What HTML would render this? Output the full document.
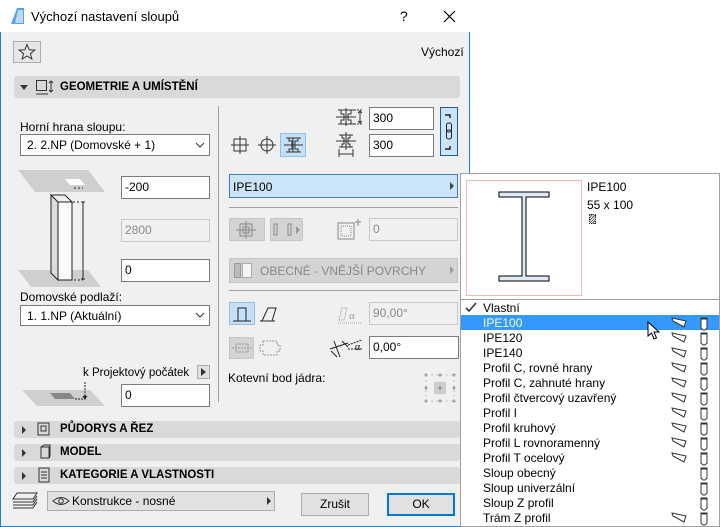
<!DOCTYPE html>
<html><head><meta charset="utf-8"><style>
*{box-sizing:border-box;margin:0;padding:0}
body{width:720px;height:527px;overflow:hidden;background:#fff;font-family:"Liberation Sans",sans-serif;font-size:12px;color:#000;position:relative}
.a{position:absolute}
.dlg{left:0;top:0;width:470px;height:527px;background:#f0f0f0;border:1px solid #1883d7;border-top:none}
.title{left:0;top:0;width:470px;height:32px;background:#fff}
.inp{position:absolute;background:#fff;border:1px solid #7a7a7a;padding:3px 3px;font-size:12px;line-height:14px}
.dis{background:#f0f0f0;border-color:#c8c8c8;color:#8a8a8a}
.sel{position:absolute;background:#fff;border:1px solid #7a7a7a;padding:3px 6px;line-height:14px}
.hdr{position:absolute;left:14px;width:446px;background:#d9d9d9;border-radius:3px;font-weight:bold;font-size:11.5px}
.tri{position:absolute;width:0;height:0}
.row{position:absolute;left:461px;width:258px;height:15px;line-height:16px;padding-left:22px}
.btn{position:absolute;background:#e1e1e1;border:1px solid #adadad;text-align:center;line-height:20px}
</style></head><body>
<div class="a dlg"></div>
<div class="a title"></div>
<svg class="a" style="left:9px;top:7px" width="17" height="18"><path d="M2 17 L8 1 L15 1 L15 17 Z" fill="#5aa3e8"/><path d="M9 3 L14 3 L14 16 L6 16 Z" fill="#bcdaf7"/></svg>
<div class="a" style="left:31px;top:9px;font-size:13px">Výchozí nastavení sloupů</div>
<div class="a" style="left:400px;top:8px;font-size:14px">?</div>
<svg class="a" style="left:443px;top:10px" width="13" height="13"><path d="M1 1L12 12M12 1L1 12" stroke="#000" stroke-width="1.2"/></svg>

<div class="a" style="left:13px;top:41px;width:28px;height:22px;border:1px solid #adadad;background:#e6e6e6"></div>
<svg class="a" style="left:18px;top:43px" width="18" height="18"><path d="M9 1.5L11.2 6.8L16.8 7.1L12.4 10.6L13.9 16L9 13L4.1 16L5.6 10.6L1.2 7.1L6.8 6.8Z" fill="none" stroke="#333"/></svg>
<div class="a" style="left:421px;top:45px">Výchozí</div>

<div class="hdr" style="top:76px;height:22px"></div>
<div class="tri" style="left:20px;top:85px;border-left:4px solid transparent;border-right:4px solid transparent;border-top:5px solid #333"></div>
<svg class="a" style="left:35px;top:79px" width="20" height="17"><rect x="1.5" y="1.5" width="10" height="10" fill="none" stroke="#333"/><path d="M1 15L13 15M16 2V13M14 4L16 2L18 4M14 11L16 13L18 11" stroke="#333" fill="none"/></svg>
<div class="a" style="left:60px;top:81px;font-weight:bold;font-size:11.5px">GEOMETRIE A UMÍSTĚNÍ</div>

<div class="a" style="left:218px;top:106px;width:1px;height:296px;background:#a0a0a0"></div>

<div class="a" style="left:20px;top:120px">Horní hrana sloupu:</div>
<div class="sel" style="left:20px;top:134px;width:190px;height:22px">2. 2.NP (Domovské + 1)</div>
<svg class="a" style="left:195px;top:142px" width="10" height="6"><path d="M1 1L5 5L9 1" stroke="#333" fill="none"/></svg>

<svg class="a" style="left:15px;top:167px" width="90" height="120">
<path d="M3 3H73L90 25H20Z" fill="#cfcfcf"/>
<path d="M50 12H65L70 18H55Z" fill="#fff"/>
<path d="M3 103H73L90 125H20Z" fill="#cfcfcf"/>
<path d="M36 28L43 35V113L36 106Z" fill="#dcdcdc" stroke="#222"/>
<path d="M36 28H50L57 35H43Z" fill="#eee" stroke="#222"/>
<rect x="43" y="35" width="14" height="78" fill="#fafafa" stroke="#222"/>
<path d="M68 35V112M66 35H70M66 112H70" stroke="#222"/>
<path d="M58 35H68M59 113H68M59 21H68" stroke="#222" stroke-dasharray="2 2"/>
</svg>
<div class="inp" style="left:121px;top:176px;width:89px;height:23px">-200</div>
<div class="inp dis" style="left:121px;top:219px;width:89px;height:23px">2800</div>
<div class="inp" style="left:121px;top:259px;width:89px;height:23px">0</div>

<div class="a" style="left:20px;top:290px">Domovské podlaží:</div>
<div class="sel" style="left:20px;top:305px;width:190px;height:21px">1. 1.NP (Aktuální)</div>
<svg class="a" style="left:195px;top:312px" width="10" height="6"><path d="M1 1L5 5L9 1" stroke="#333" fill="none"/></svg>

<div class="a" style="left:83px;top:367px;font-size:11.5px">k Projektový počátek</div>
<div class="a" style="left:197px;top:365px;width:13px;height:14px;background:#e1e1e1;border:1px solid #adadad"></div>
<div class="tri" style="left:201px;top:368px;border-top:4px solid transparent;border-bottom:4px solid transparent;border-left:5px solid #333"></div>
<svg class="a" style="left:20px;top:380px" width="85" height="30"><path d="M2 10H70L85 26H17Z" fill="#cfcfcf"/><path d="M30 13H50L55 19H35Z" fill="#888"/><path d="M65 2V18M63 16L65 19L67 16M55 19H65" stroke="#222" stroke-dasharray="2 1"/></svg>
<div class="inp" style="left:121px;top:384px;width:89px;height:23px">0</div>

<svg class="a" style="left:231px;top:136px" width="18" height="18"><rect x="3" y="3" width="12" height="12" fill="none" stroke="#333"/><path d="M9 0V18M0 9H18" stroke="#333"/></svg>
<svg class="a" style="left:258px;top:136px" width="18" height="18"><circle cx="9" cy="9" r="6" fill="none" stroke="#333"/><path d="M9 0V18M0 9H18" stroke="#333"/></svg>
<div class="a" style="left:280px;top:133px;width:26px;height:24px;background:#c5dff6;border:1px solid #8fc0ea"></div>
<svg class="a" style="left:284px;top:136px" width="19" height="18"><path d="M2 2H17M2 16H17M9 2V16M0 9H19" stroke="#333" fill="none"/><path d="M5 2V5H8V13H5V16M14 2V5H11V13H14V16" stroke="#333" fill="none"/></svg>
<svg class="a" style="left:336px;top:106px" width="30" height="22"><path d="M2 4H18M2 18H18M0 11H20M10 2V20M5 4V8H8V14H5V18M15 4V8H12V14H15V18" stroke="#333" fill="none"/><path d="M18 4H26M18 18H26" stroke="#333" stroke-dasharray="2 1"/><path d="M24 5V17M22 7L24 5L26 7M22 15L24 17L26 15" stroke="#333" fill="none"/></svg>
<svg class="a" style="left:336px;top:132px" width="22" height="26"><path d="M3 3H17M3 15H17M0 9H20M10 0V18M6 3V6H8V12H6V15M14 3V6H12V12H14V15" stroke="#333" fill="none"/><path d="M3 17V25M17 17V25M3 22H17" stroke="#333" fill="none"/></svg>
<div class="inp" style="left:369px;top:107px;width:65px;height:23px">300</div>
<div class="inp" style="left:369px;top:134px;width:65px;height:23px">300</div>
<div class="a" style="left:440px;top:107px;width:18px;height:49px;background:#cce4f7;border:1px solid #1c5f9f"></div>
<svg class="a" style="left:443px;top:111px" width="12" height="42"><path d="M2 4H7V7M2 38H7V35" stroke="#222" stroke-width="1.5" fill="none"/><rect x="3.5" y="12" width="5" height="9" rx="2" fill="none" stroke="#222"/><rect x="3.5" y="19" width="5" height="9" rx="2" fill="none" stroke="#222"/></svg>

<div class="a" style="left:229px;top:174px;width:229px;height:24px;background:#cce4f7;border:1px solid #3d7fc0;padding:5px 3px">IPE100</div>
<div class="tri" style="left:450px;top:182px;border-top:4px solid transparent;border-bottom:4px solid transparent;border-left:4px solid #444"></div>
<div class="a" style="left:229px;top:207px;width:229px;height:1px;background:#a0a0a0"></div>

<div class="a" style="left:229px;top:218px;width:36px;height:23px;background:#d4d4d4;border:1px solid #c6c6c6"></div>
<svg class="a" style="left:236px;top:221px" width="20" height="18"><rect x="4" y="3" width="12" height="12" fill="none" stroke="#888"/><rect x="7" y="6" width="6" height="6" fill="none" stroke="#888"/><path d="M10 0V18M0 9H20" stroke="#888"/></svg>
<div class="a" style="left:270px;top:218px;width:33px;height:23px;background:#d4d4d4;border:1px solid #c6c6c6"></div>
<svg class="a" style="left:273px;top:222px" width="28" height="16"><rect x="1" y="2" width="3" height="11" fill="none" stroke="#888"/><rect x="15" y="2" width="3" height="11" fill="none" stroke="#888"/><path d="M23 4L27 8L23 12Z" fill="#999"/></svg>
<svg class="a" style="left:333px;top:218px" width="30" height="24"><rect x="5" y="5" width="16" height="16" fill="none" stroke="#888"/><rect x="8" y="8" width="10" height="10" fill="none" stroke="#888" stroke-dasharray="1 1"/><path d="M25 1V8M22 4H28" stroke="#888"/></svg>
<div class="inp dis" style="left:369px;top:218px;width:89px;height:23px">0</div>

<div class="a" style="left:229px;top:258px;width:229px;height:25px;background:#d4d4d4;border:1px solid #c6c6c6;color:#888;padding:5px 0 0 30px;font-size:12px">OBECNÉ - VNĚJŠÍ POVRCHY</div>
<div class="a" style="left:234px;top:263px;width:7px;height:15px;background:#bbb;border:1px solid #999"></div>
<div class="a" style="left:242px;top:263px;width:10px;height:15px;background:#f5f5f5;border:1px solid #aaa"></div>
<div class="tri" style="left:450px;top:266px;border-top:4px solid transparent;border-bottom:4px solid transparent;border-left:4px solid #999"></div>
<div class="a" style="left:229px;top:290px;width:229px;height:1px;background:#a0a0a0"></div>

<div class="a" style="left:229px;top:302px;width:26px;height:23px;background:#c5dff6;border:1px solid #8fc0ea"></div>
<svg class="a" style="left:232px;top:305px" width="20" height="18"><path d="M1 16H19M6 16V3H14V16" stroke="#222" fill="none"/></svg>
<svg class="a" style="left:259px;top:305px" width="20" height="18"><path d="M1 16H16M3 16L9 3H17L13 16" stroke="#222" fill="none"/></svg>
<svg class="a" style="left:336px;top:304px" width="26" height="20"><path d="M3 16L6 4H11L8 16Z" fill="none" stroke="#999" stroke-dasharray="1 1"/><text x="13" y="15" font-size="11" fill="#999" font-family="Liberation Serif">α</text><path d="M2 19H26" stroke="#aaa" stroke-dasharray="1 1"/></svg>
<div class="inp dis" style="left:369px;top:302px;width:89px;height:23px">90,00°</div>

<div class="a" style="left:229px;top:337px;width:25px;height:22px;background:#d4d4d4;border:1px solid #c6c6c6"></div>
<svg class="a" style="left:230px;top:340px" width="24" height="16"><path d="M2 8H22M6 4H18V12H6Z" stroke="#999" fill="none" stroke-dasharray="2 1"/></svg>
<svg class="a" style="left:259px;top:338px" width="22" height="20"><path d="M4 3H18V7H21V13H18V17H4V13H1V7H4Z" stroke="#999" fill="none" stroke-dasharray="2 1"/></svg>
<svg class="a" style="left:328px;top:337px" width="36" height="24"><path d="M2 12L20 6M6 4L12 20M3 14L9 20M14 4L20 10" stroke="#222" fill="none"/><path d="M20 8L34 3M20 12H35" stroke="#222" stroke-dasharray="2 1"/><text x="27" y="13" font-size="10" font-family="Liberation Serif">α</text></svg>
<div class="inp" style="left:369px;top:336px;width:90px;height:23px">0,00°</div>

<div class="a" style="left:228px;top:371px">Kotevní bod jádra:</div>
<svg class="a" style="left:423px;top:372px" width="34" height="32"><g fill="#999"><circle cx="3" cy="3" r="1.5"/><circle cx="17" cy="3" r="1.5"/><circle cx="31" cy="3" r="1.5"/><circle cx="3" cy="16" r="1.5"/><circle cx="31" cy="16" r="1.5"/><circle cx="3" cy="29" r="1.5"/><circle cx="17" cy="29" r="1.5"/><circle cx="31" cy="29" r="1.5"/></g><path d="M3 3H31M3 29H31M3 3V29M31 3V29" stroke="#bbb" stroke-dasharray="2 3"/><rect x="11" y="10" width="12" height="12" fill="#ccc"/><circle cx="17" cy="16" r="1.5" fill="#888"/></svg>

<div class="hdr" style="top:421px;height:17px"></div>
<div class="hdr" style="top:444px;height:17px"></div>
<div class="hdr" style="top:467px;height:17px"></div>
<div class="tri" style="left:22px;top:426px;border-top:4px solid transparent;border-bottom:4px solid transparent;border-left:4px solid #333"></div>
<div class="tri" style="left:22px;top:449px;border-top:4px solid transparent;border-bottom:4px solid transparent;border-left:4px solid #333"></div>
<div class="tri" style="left:22px;top:472px;border-top:4px solid transparent;border-bottom:4px solid transparent;border-left:4px solid #333"></div>
<svg class="a" style="left:36px;top:421px" width="16" height="17"><rect x="2" y="2" width="11" height="12" fill="none" stroke="#333"/><rect x="5" y="5" width="5" height="5" fill="none" stroke="#333"/></svg>
<svg class="a" style="left:38px;top:444px" width="14" height="17"><path d="M3 3H11V14H3ZM3 3L6 1H12V12L11 14" stroke="#333" fill="none"/></svg>
<svg class="a" style="left:37px;top:467px" width="14" height="17"><rect x="2" y="1" width="10" height="14" fill="none" stroke="#333"/><path d="M4 5H10M4 8H10M4 11H10" stroke="#333"/></svg>
<div class="a" style="left:60px;top:423px;font-weight:bold;font-size:11.5px">PŮDORYS A ŘEZ</div>
<div class="a" style="left:60px;top:446px;font-weight:bold;font-size:11.5px">MODEL</div>
<div class="a" style="left:60px;top:469px;font-weight:bold;font-size:11.5px">KATEGORIE A VLASTNOSTI</div>

<svg class="a" style="left:11px;top:491px" width="28" height="20"><path d="M6 2H26L22 8H2Z M2 11H22L26 5 M2 14H22L26 8 M2 17H22L26 11" stroke="#333" fill="none"/></svg>
<div class="a" style="left:47px;top:491px;width:228px;height:20px;background:#e1e1e1;border:1px solid #adadad;padding:2px 0 0 24px">Konstrukce - nosné</div>
<svg class="a" style="left:52px;top:496px" width="18" height="10"><path d="M1 5Q9 -2 17 5Q9 12 1 5Z" fill="none" stroke="#333"/><circle cx="9" cy="5" r="2.3" fill="none" stroke="#333"/></svg>
<div class="tri" style="left:267px;top:497px;border-top:4px solid transparent;border-bottom:4px solid transparent;border-left:4px solid #333"></div>
<div class="btn" style="left:301px;top:493px;width:68px;height:23px">Zrušit</div>
<div class="btn" style="left:387px;top:493px;width:68px;height:23px;border:2px solid #0078d7;line-height:19px">OK</div>

<div class="a" style="left:460px;top:173px;width:260px;height:354px;background:#fff;border:1px solid #a0a0a0"></div>
<div class="a" style="left:466px;top:180px;width:116px;height:116px;border:1px solid #f4b8b8"></div>
<svg class="a" style="left:495px;top:190px" width="60" height="100"><g fill="#dfe9f7" stroke="#000"><path d="M4 2H54V7H31V86H54V91H4V86H27V7H4Z"/></g></svg>
<div class="a" style="left:587px;top:180px">IPE100</div>
<div class="a" style="left:587px;top:198px">55 x 100</div>
<div class="a" style="left:589px;top:214px;width:7px;height:10px;border:1px dotted #333;background:repeating-linear-gradient(135deg,#fff 0 1px,#555 1px 2px)"></div>
<div class="a" style="left:461px;top:299px;width:258px;height:1px;background:#a0a0a0"></div>
<svg class="a" style="left:465px;top:302px" width="12" height="11"><path d="M1 6L4 9L11 1" stroke="#333" stroke-width="1.6" fill="none"/></svg>
<div class="row" style="top:300px">Vlastní</div>
<div class="row" style="top:315px;background:#3399ff;color:#fff">IPE100</div>
<div class="row" style="top:330px">IPE120</div>
<div class="row" style="top:345px">IPE140</div>
<div class="row" style="top:360px">Profil C, rovné hrany</div>
<div class="row" style="top:375px">Profil C, zahnuté hrany</div>
<div class="row" style="top:390px">Profil čtvercový uzavřený</div>
<div class="row" style="top:405px">Profil I</div>
<div class="row" style="top:420px">Profil kruhový</div>
<div class="row" style="top:435px">Profil L rovnoramenný</div>
<div class="row" style="top:450px">Profil T ocelový</div>
<div class="row" style="top:465px">Sloup obecný</div>
<div class="row" style="top:480px">Sloup univerzální</div>
<div class="row" style="top:495px">Sloup Z profil</div>
<div class="row" style="top:510px">Trám Z profil</div>
<svg class="a" style="left:670px;top:315px" width="45" height="212">
<defs><g id="b"><path d="M2 3L16 6L14 12L3 6Z" fill="#fff" stroke="#333"/></g><g id="c"><path d="M31 3H37V13L35 15H33L31 13Z M31 4H37" fill="#fff" stroke="#333"/></g></defs>
<use href="#b" y="0"/><use href="#b" y="15"/><use href="#b" y="30"/><use href="#b" y="45"/><use href="#b" y="60"/><use href="#b" y="75"/><use href="#b" y="90"/><use href="#b" y="105"/><use href="#b" y="120"/><use href="#b" y="135"/><use href="#b" y="195"/>
<use href="#c" y="0"/><use href="#c" y="15"/><use href="#c" y="30"/><use href="#c" y="45"/><use href="#c" y="60"/><use href="#c" y="75"/><use href="#c" y="90"/><use href="#c" y="105"/><use href="#c" y="120"/><use href="#c" y="135"/><use href="#c" y="150"/><use href="#c" y="165"/><use href="#c" y="180"/><use href="#c" y="195"/>
</svg>
<svg class="a" style="left:647px;top:321px" width="14" height="20"><path d="M1 1V15L4.5 12L7 18L9.5 17L7 11H12Z" fill="#fff" stroke="#000"/></svg>
</body></html>
